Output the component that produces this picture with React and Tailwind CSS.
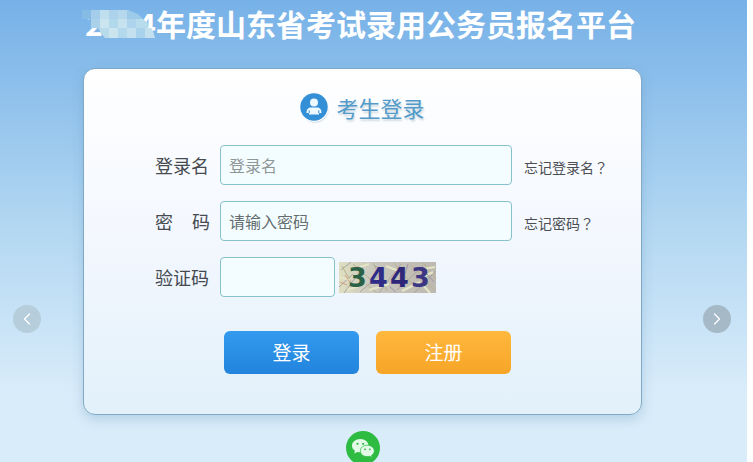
import React from 'react';
import { ChevronLeft, ChevronRight } from 'lucide-react';

const mosaic = [
  { x: 0, y: 0, fill: '#86bbe5' },
  { x: 9, y: 0, fill: '#a3cdea' },
  { x: 18, y: 0, fill: '#c0dfee' },
  { x: 27, y: 0, fill: '#acd3eb' },
  { x: 36, y: 0, fill: '#b5d8ec' },
  { x: 45, y: 0, fill: '#9ccbea' },
  { x: 54, y: 0, fill: '#9ccbea' },
  { x: 9, y: 9, fill: '#a9d2ea' },
  { x: 18, y: 9, fill: '#cbe5ef' },
  { x: 27, y: 9, fill: '#b2d8ec' },
  { x: 36, y: 9, fill: '#c6e2ee' },
  { x: 45, y: 9, fill: '#add4ec' },
  { x: 54, y: 9, fill: '#b9dced' },
  { x: 9, y: 18, fill: '#a9d2ea' },
  { x: 18, y: 18, fill: '#b7dbeb' },
  { x: 27, y: 18, fill: '#cbe5ef' },
  { x: 36, y: 18, fill: '#b4d9ec' },
  { x: 45, y: 18, fill: '#c5e1ef' },
  { x: 54, y: 18, fill: '#a9d2ec' },
  { x: 63, y: 18, fill: '#c3e0ef' },
];

const captchaDigits = [
  { value: '3', x: 9, fill: '#2b6246' },
  { value: '4', x: 30, fill: '#2f2c88' },
  { value: '4', x: 51, fill: '#2e2779' },
  { value: '3', x: 72, fill: '#3c3683' },
];

const Title = () => (
  <h1 className="relative text-center text-[30px] leading-[46px] font-bold whitespace-nowrap text-white">
    2024年度山东省考试录用公务员报名平台
    <svg className="absolute top-[10px] -left-[3px]" width="75" height="28" viewBox="0 0 75 28" aria-hidden="true">
      <clipPath id="mosaic-edge">
        <path d="M0 0H45Q57 3 61 9Q71 16 73 28H23Q18 22 16 18L9 18V9H0Z" />
      </clipPath>
      <g clipPath="url(#mosaic-edge)">
        {mosaic.map((cell, idx) => (
          <rect key={idx} x={cell.x} y={cell.y} width="12" height="10" fill={cell.fill} />
        ))}
      </g>
    </svg>
  </h1>
);

const UserIcon = () => (
  <svg width="32" height="32" viewBox="0 0 32 32" aria-hidden="true">
    <circle cx="17" cy="18" r="14" fill="#dbe6ee" />
    <circle cx="16" cy="16" r="15" fill="#f8fcff" />
    <circle cx="16" cy="16" r="13.7" fill="#338fd6" />
    <circle cx="16" cy="11.5" r="4" fill="#eef9ff" />
    <path d="M8.5 22C8.5 18 10.5 16.5 13 16.5H19C21.5 16.5 23.5 18 23.5 22H21V23.5H11V22Z" fill="#eef9ff" />
    <path d="M11.2 19.3V22M20.8 19.3V22" stroke="#338fd6" strokeWidth="1" />
  </svg>
);

const Captcha = () => (
  <svg width="97" height="31" viewBox="0 0 97 31" role="img" aria-label="验证码图片">
    <defs>
      <linearGradient id="captcha-bg">
        <stop offset="0" stopColor="#dedfc2" />
        <stop offset="0.4" stopColor="#c8c5bd" />
        <stop offset="1" stopColor="#bdb9b0" />
      </linearGradient>
    </defs>
    <rect width="97" height="31" fill="url(#captcha-bg)" />
    <g fill="none" strokeWidth="1">
      <path d="M0 25L14 12M5 31L25 4M21 30L44 10M40 31L62 2M58 28L84 4M75 31L97 9M2 8L12 0" stroke="#a9a6a0" />
      <path d="M3 4L15 25M14 2L31 17M34 1L48 29M55 1L73 22M72 3L94 27M84 1L97 17M27 22L38 31" stroke="#b8b18e" />
      <path d="M0 15L11 18M18 6L30 2M30 28L50 22M47 4L62 10M63 29L81 20M78 8L96 5M83 22L91 31M8 28L20 24M86 14L94 10" stroke="#e4e5c6" strokeWidth="2" />
      <path d="M6 13L12 22M1 20L8 23M14 8L20 4" stroke="#d59e82" />
      <path d="M36 4L43 9M51 25L57 30M69 2L66 12M88 12L95 20M60 18L65 24" stroke="#9d96ad" />
    </g>
    <g fontFamily="DejaVu Sans" fontSize="27" fontWeight="bold">
      {captchaDigits.map((digit, idx) => (
        <text key={idx} x={digit.x} y="25" fill={digit.fill}>{digit.value}</text>
      ))}
    </g>
  </svg>
);

const WechatIcon = () => (
  <svg width="34" height="34" viewBox="0 0 34 34" aria-hidden="true">
    <circle cx="17" cy="17" r="17" fill="#2dbb42" />
    <path d="M14.3 8C9.6 8 6 11 6 14.7c0 2.1 1.2 3.9 3 5.1l-.8 2.6 3-1.5c1 .3 2 .4 3.1.4 4.6 0 8.3-3 8.3-6.6S18.9 8 14.3 8z" fill="#e4fae8" />
    <circle cx="11.5" cy="12.8" r="1.1" fill="#2dbb42" />
    <circle cx="17.2" cy="12.8" r="1.1" fill="#2dbb42" />
    <path d="M21.3 14.2c-4 0-7 2.5-7 5.7s3 5.7 7 5.7c.9 0 1.7-.1 2.5-.4l2.5 1.3-.7-2.2c1.6-1 2.7-2.6 2.7-4.4 0-3.2-3.1-5.7-7-5.7z" fill="#e4fae8" stroke="#2dbb42" strokeWidth="0.8" />
    <circle cx="19" cy="18.3" r="0.9" fill="#2dbb42" />
    <circle cx="23.8" cy="18.3" r="0.9" fill="#2dbb42" />
  </svg>
);

const inputClass =
  'h-10 rounded border border-[#87c1cc] bg-[#f3fdff] px-2 text-base outline-none focus:border-[#338fd6]';
const labelClass = 'flex w-[55px] justify-between text-lg text-[#444a50]';
const linkClass = 'pt-1 text-sm whitespace-nowrap text-[#4b4f54] hover:underline';
const buttonClass = 'h-[43px] flex-1 rounded-md text-[19px] text-white';

// The TC face centres the full-width question mark in its box
const QuestionMark = () => <span className="font-['Noto_Sans_CJK_TC',sans-serif]">？</span>;

const LoginForm = () => (
  <form
    className="rounded-xl border border-[#7fa9c6] bg-linear-to-b from-white via-[#f3f7fe] to-[#e2f1fa] pt-[18px] pr-[33px] pb-10 pl-[71px] shadow-[0_4px_12px_rgba(90,140,180,0.3)]"
    onSubmit={(e) => e.preventDefault()}
  >
    <h2 className="mb-[18px] flex items-center justify-center gap-1.5 pr-10 text-[22px] leading-10 text-[#529bca] [text-shadow:1px_2px_2px_#ccd6dd]">
      <UserIcon />
      考生登录
    </h2>

    <div className="grid grid-cols-[55px_1fr_84px] items-center gap-y-4">
      <label htmlFor="username" className={labelClass}>登录名</label>
      <input id="username" type="text" placeholder="登录名" className={`${inputClass} mr-3 ml-[10px] min-w-0 placeholder:text-[#8f9696]`} />
      <a href="#forgot-name" className={linkClass}>忘记登录名<QuestionMark /></a>

      <label htmlFor="password" className={labelClass}>
        <span>密</span>
        <span>码</span>
      </label>
      <input id="password" type="password" placeholder="请输入密码" className={`${inputClass} mr-3 ml-[10px] min-w-0 placeholder:text-[#666d70]`} />
      <a href="#forgot-password" className={linkClass}>忘记密码<QuestionMark /></a>

      <label htmlFor="captcha" className={labelClass}>验证码</label>
      <div className="ml-[10px] flex items-center gap-1">
        <input id="captcha" type="text" className={`${inputClass} w-[115px]`} />
        <Captcha />
      </div>
    </div>

    <div className="mt-[34px] mr-[97px] ml-[69px] flex gap-[17px]">
      <button type="submit" className={`${buttonClass} bg-linear-to-b from-[#339af0] to-[#2284dc]`}>登录</button>
      <button type="button" className={`${buttonClass} bg-linear-to-b from-[#ffb83d] to-[#f6a526]`}>注册</button>
    </div>
  </form>
);

const App = () => {
  return (
    <div className="min-h-screen bg-white pr-[6px] font-['Noto_Sans_CJK_SC',sans-serif]">
      <div className="relative min-h-screen bg-linear-to-b from-[#76b1e7] via-[#b4d8f2] via-50% to-[#d9ecfa] to-85%">
        <main className="pr-[105px] pl-[83px]">
          <div className="mb-[22px] flex justify-center pr-1">
            <Title />
          </div>
          <LoginForm />
          <a href="#wechat" aria-label="微信" className="mx-auto mt-4 block w-[34px]">
            <WechatIcon />
          </a>
        </main>

        {/* Carousel arrows */}
        <button type="button" aria-label="上一张" className="absolute top-[305px] left-[13px] flex size-7 items-center justify-center rounded-full bg-[#b6cddb] text-white">
          <ChevronLeft size={20} strokeWidth={1.5} />
        </button>
        <button type="button" aria-label="下一张" className="absolute top-[305px] right-4 flex size-7 items-center justify-center rounded-full bg-[#a5b9c7] text-white">
          <ChevronRight size={20} strokeWidth={1.5} />
        </button>
      </div>
    </div>
  );
};

export default App;
